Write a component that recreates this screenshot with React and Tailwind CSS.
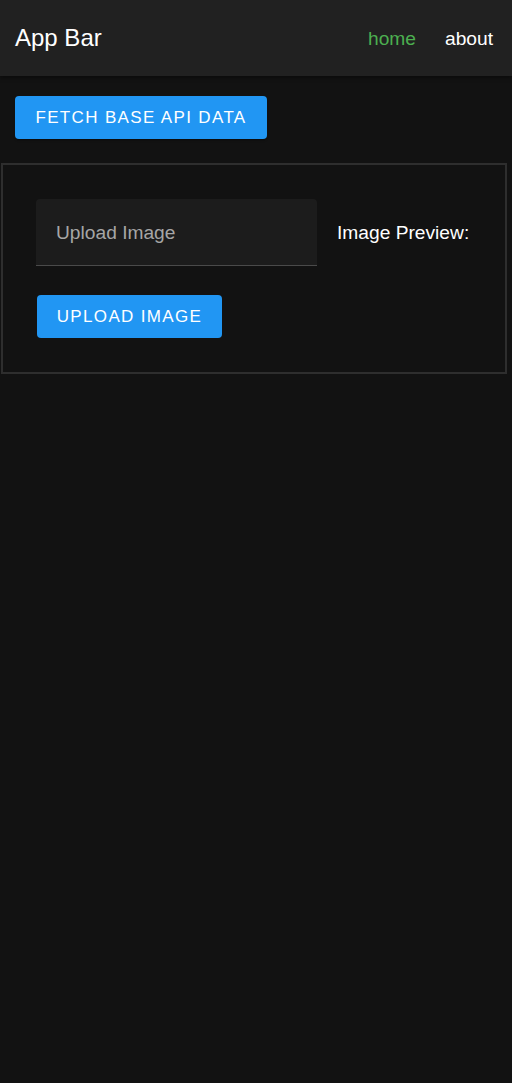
export default function App() {
  return (
    <div className="min-h-[1083px] bg-[#121212] text-white font-['Liberation_Sans',Arial,sans-serif]">
      {/* App bar */}
      <header className="h-[76px] bg-[#212121] flex items-center justify-between pl-[15px] pr-[19px] shadow-[0_2px_4px_rgba(0,0,0,0.4)]">
        <h1 className="text-[24px] leading-none">App Bar</h1>
        <nav className="flex items-center gap-[29px] text-[19.2px] leading-none pt-[2px]">
          <a className="text-[#4caf50]">home</a>
          <a className="text-white">about</a>
        </nav>
      </header>

      <div className="pt-[20px] px-[15px]">
        <button className="h-[43px] w-[252px] rounded-[4px] bg-[#2196f3] text-[17px] tracking-[1.35px] uppercase text-white shadow-[0_3px_1px_-2px_rgba(0,0,0,0.2),0_2px_2px_0_rgba(0,0,0,0.14)]">
          Fetch Base API Data
        </button>
      </div>

      <section className="mt-[24px] ml-[1px] w-[506px] border-2 border-[#2e2e2e] pt-[34px] pb-[34px] pl-[33px]">
        <div className="flex items-center">
          <div className="h-[67px] w-[281px] rounded-t-[4px] bg-[#1c1c1c] border-b border-[#4a4a4a] flex items-center px-[20px] pt-[2px] text-[19.2px] text-[#a6a6a6]">
            Upload Image
          </div>
          <span className="ml-[20px] pt-[2px] text-[19.2px] text-white">Image Preview:</span>
        </div>
        <button className="mt-[29px] ml-[1px] h-[43px] w-[185px] rounded-[4px] bg-[#2196f3] text-[17px] tracking-[1.35px] uppercase text-white">
          Upload Image
        </button>
      </section>
    </div>
  );
}
